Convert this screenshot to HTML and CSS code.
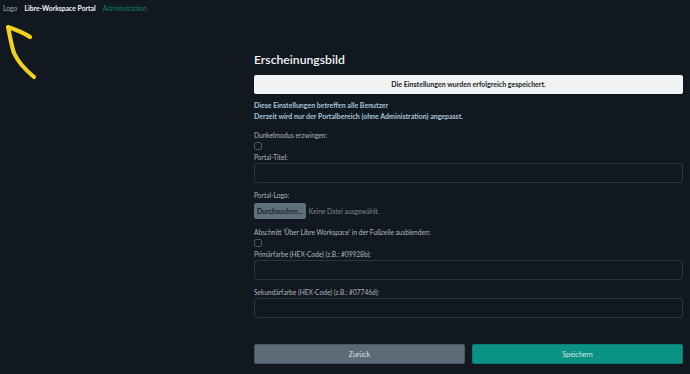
FILE: index.html
```html
<!DOCTYPE html>
<html>

<head>
    <title>Erscheinungsbild</title>
    <link rel="stylesheet" href="styles.css">
</head>

<body>
    <nav class="topbar">
        <span class="logo">Logo</span>
        <span class="brand">Libre-Workspace Portal</span>
        <a class="nav-link" href="#">Administration</a>
    </nav>

    <svg class="arrow" width="44" height="66" viewBox="0 0 44 66">
        <path d="M34 61 C28 56 18 46 14 37 C11 28 10 20 8 11 C14 13 24 17 30 21"
            fill="none" stroke="#f4d11c" stroke-width="4.2" stroke-linecap="round" stroke-linejoin="round" />
    </svg>

    <main class="content">
        <h1>Erscheinungsbild</h1>
        <div class="alert">Die Einstellungen wurden erfolgreich gespeichert.</div>

        <p class="info">Diese Einstellungen betreffen alle Benutzer<br>
            Derzeit wird nur der Portalbereich (ohne Administration) angepasst.</p>

        <form class="settings">
            <label>Dunkelmodus erzwingen:</label>
            <span class="check"></span>

            <label>Portal-Titel:</label>
            <div class="input"></div>

            <label class="spaced">Portal-Logo:</label>
            <div class="file-row">
                <span class="file-button">Durchsuchen...</span>
                <span class="file-name">Keine Datei ausgewählt.</span>
            </div>

            <label class="spaced">Abschnitt 'Über Libre Workspace' in der Fußzeile ausblenden:</label>
            <span class="check"></span>

            <label>Primärfarbe (HEX-Code) (z.B.: #09928b):</label>
            <div class="input"></div>

            <label class="spaced">Sekundärfarbe (HEX-Code) (z.B.: #07746d):</label>
            <div class="input"></div>

            <div class="actions">
                <span class="btn btn-back">Zurück</span>
                <span class="btn btn-save">Speichern</span>
            </div>
        </form>
    </main>
</body>

</html>
```

FILE: styles.css
```css
body {
    margin: 0;
    background-color: #12181f;
    font-family: 'Lato', 'Noto Sans', sans-serif;
    color: #b8c1c9;
    height: 374px;
    overflow: hidden;
}

.topbar {
    display: flex;
    align-items: center;
    gap: 7px;
    height: 16px;
    padding-left: 3px;
    font-size: 6.8px;
}

.logo {
    color: #9aa3ab;
}

.brand {
    color: #f2f4f6;
    font-weight: bold;
}

.nav-link {
    color: #0c7d72;
    text-decoration: none;
}

.arrow {
    position: absolute;
    left: 0;
    top: 16px;
}

.content {
    width: 429px;
    margin-left: 254px;
    padding-top: 34px;
}

h1 {
    margin: 0 0 5px;
    font-size: 12.2px;
    font-weight: 600;
    color: #f2f4f6;
    line-height: 20px;
}

.alert {
    background-color: #f0f2f4;
    color: #1b1f24;
    border-radius: 2px;
    font-size: 7px;
    font-weight: bold;
    text-align: center;
    line-height: 19px;
}

.info {
    margin: 5.5px 0 8px;
    font-size: 7px;
    font-weight: bold;
    line-height: 11px;
    color: #a8c4dc;
}

.settings {
    display: flex;
    flex-direction: column;
    align-items: flex-start;
}

.settings label {
    font-size: 6.6px;
    line-height: 11px;
    color: #aeb7bf;
}

.settings label.spaced {
    margin-top: 6.5px;
}

.check {
    width: 6px;
    height: 6px;
    margin: 1.5px 0 1.5px;
    border: 1px solid #4b5660;
    border-radius: 2px;
}

.input {
    align-self: stretch;
    height: 18px;
    margin-top: 0.5px;
    border: 1px solid #2c353f;
    border-radius: 3px;
}

.file-row {
    display: flex;
    align-items: center;
    gap: 3px;
    margin-top: 2.5px;
    margin-bottom: 1px;
}

.file-button {
    background-color: #5e6e7b;
    color: #141a21;
    font-size: 7px;
    font-weight: 600;
    line-height: 16px;
    padding: 0 3px;
    border-radius: 2px;
}

.file-name {
    font-size: 6.7px;
    color: #7d8790;
}

.actions {
    align-self: stretch;
    display: flex;
    gap: 7px;
    margin-top: 26px;
}

.btn {
    flex: 1;
    text-align: center;
    font-size: 7px;
    line-height: 18px;
    border-radius: 2px;
    color: #dfe5ea;
    border: 1px solid transparent;
}

.btn-back {
    background-color: #5c6b77;
    border-color: #4a5661;
}

.btn-save {
    background-color: #0a9285;
    border-color: #0b7d72;
}
```
